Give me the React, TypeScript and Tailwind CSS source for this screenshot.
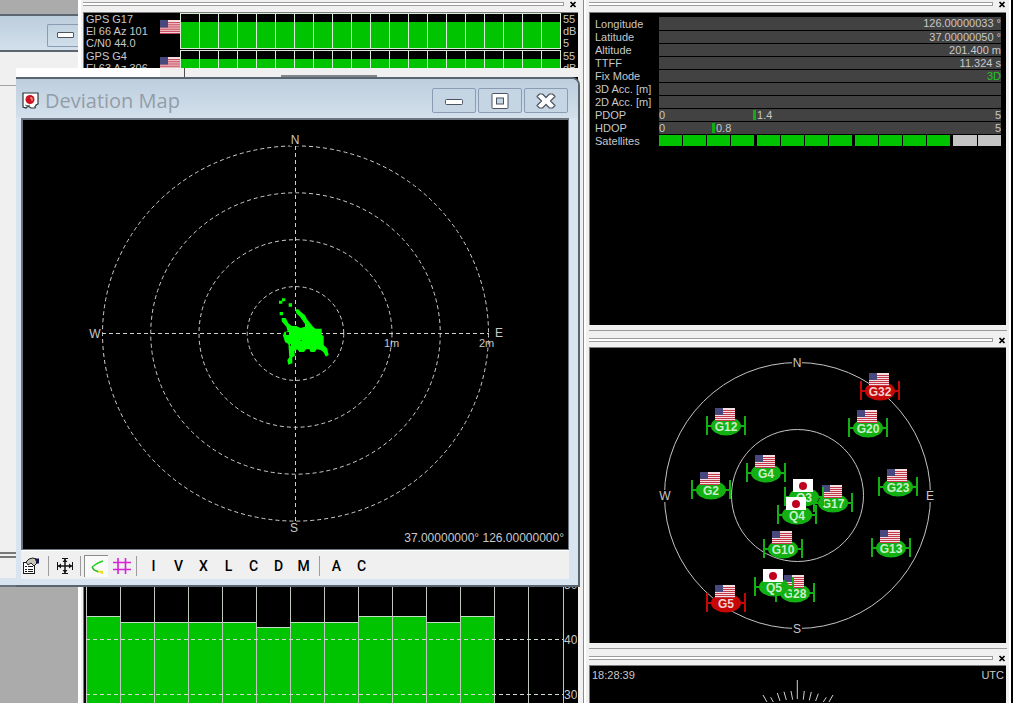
import React from 'react';
import clsx from 'clsx';

type Nation = 'us' | 'jp';

interface Satellite { id: string; x: number; y: number; nation: Nation; unused?: boolean }

// Centre of each marker on the sky view, drawn back to front
const SATELLITES: Satellite[] = [
  { id: 'G32', x: 291, y: 43,  nation: 'us', unused: true },
  { id: 'G12', x: 137, y: 78,  nation: 'us' },
  { id: 'G20', x: 279, y: 80,  nation: 'us' },
  { id: 'G4',  x: 177, y: 125, nation: 'us' },
  { id: 'G2',  x: 122, y: 142, nation: 'us' },
  { id: 'G23', x: 309, y: 139, nation: 'us' },
  { id: 'G17', x: 244, y: 155, nation: 'us' },
  { id: 'Q3',  x: 215, y: 149, nation: 'jp' },
  { id: 'Q4',  x: 208, y: 167, nation: 'jp' },
  { id: 'G10', x: 194, y: 201, nation: 'us' },
  { id: 'G13', x: 302, y: 200, nation: 'us' },
  { id: 'G28', x: 206, y: 245, nation: 'us' },
  { id: 'Q5',  x: 185, y: 239, nation: 'jp' },
  { id: 'G5',  x: 137, y: 255, nation: 'us', unused: true },
];

const FIX_ROWS = [
  { label: 'Longitude',   value: '126.00000033 °' },
  { label: 'Latitude',    value: '37.00000050 °' },
  { label: 'Altitude',    value: '201.400 m' },
  { label: 'TTFF',        value: '11.324 s' },
  { label: 'Fix Mode',    value: '3D', good: true },
  { label: '3D Acc. [m]', value: '' },
  { label: '2D Acc. [m]', value: '' },
];

const DOP_ROWS = [
  { label: 'PDOP', value: 1.4 },
  { label: 'HDOP', value: 0.8 },
];
const DOP_MAX = 5;

const HISTORY = [
  { id: 'G17', el: 66, az: 101, cn0: '44.0' },
  { id: 'G4',  el: 63, az: 306, cn0: '43.0' },
];

// Top edge of every signal bar
const BAR_TOPS = [286, 292, 292, 292, 292, 297, 292, 292, 286, 286, 292, 286];

const DIAL_TICKS = [
  'M540 198l12 21', 'M563 205l8 14', 'M583 192l8 24', 'M603 188l7 25', 'M624 186l5 26',
  'M643 153v57', 'M664 186l-3 26', 'M685 189l-6 25', 'M706 194l-8 22', 'M730 205l-9 14', 'M750 198l-12 21',
];

function FlagShapes({ nation }: { nation: Nation }) {
  if (nation === 'jp') {
    return (
      <>
        <rect width="20" height="13" fill="#fff" />
        <circle cx="10" cy="7" r="4" fill="#c00020" />
      </>
    );
  }
  return (
    <>
      <rect width="20" height="13" fill="#f6dfe2" />
      {[2, 4, 6, 8, 10, 12].map(y => <rect key={y} y={y} width="20" height="1" fill="#c23a4c" />)}
      <rect width="8" height="7" fill="#47487e" />
    </>
  );
}

function DockHeader({ first }: { first?: boolean }) {
  return (
    <div className={clsx('flex items-start', first ? 'h-3 pt-px' : 'h-[17px] border-t border-[#9a9a9a] pt-[6px]')}>
      <div className="mt-px h-1 flex-1 border-y border-r border-[#9c9c9c] bg-white" />
      <button aria-label="Close panel" className="ml-[5px] mr-px h-2 w-2">
        <svg viewBox="0 0 8 8" className="h-2 w-2">
          <path d="M1.500 1l5 5M6.500 1l-5 5" stroke="#000" strokeWidth="1.700" />
        </svg>
      </button>
    </div>
  );
}

const SCREEN = 'border-l border-t border-[#7c7c7c] bg-black text-[#c8c8c8]';

function HistoryRow({ id, el, az, cn0 }: { id: string; el: number; az: number; cn0: string }) {
  return (
    <div className="flex h-[37px] text-[11px] leading-[12px]">
      <div className="w-[76px] whitespace-nowrap pl-0.5">
        <div>GPS {id}</div>
        <div>El {el} Az {az}</div>
        <div>C/N0 {cn0}</div>
      </div>
      <svg viewBox="0 0 20 13" className="mt-[7px] h-[14px] w-5" preserveAspectRatio="none"><FlagShapes nation="us" /></svg>
      <div className="flex h-[36px] flex-1 border-y border-r border-[#d8ecd8]">
        {Array.from({ length: 20 }, (_, i) => (
          <div key={i} className="flex-1 border-l border-[#d8ecd8] pt-2">
            <div className="h-full bg-[#00c400]" />
          </div>
        ))}
      </div>
      <div className="w-[17px] pl-0.5">
        <div>55</div>
        <div>dB</div>
        <div>5</div>
      </div>
    </div>
  );
}

function SignalChart() {
  return (
    <svg width="493" height="373" viewBox="0 0 493 373" className="block" fontSize="12" shapeRendering="crispEdges">
      {BAR_TOPS.map((top, i) => (
        <g key={i}>
          <rect x={2 + i * 34} y={top} width="34" height={373 - top} fill="#00c400" />
          <path d={`M${2 + i * 34} ${top + 0.5}h34`} stroke="#c4dcc4" />
        </g>
      ))}
      {Array.from({ length: 15 }, (_, i) => (
        <path key={i} d={`M${2.5 + (i === 14 ? 477 : i * 34)} 0v373`} stroke="#c0c8c0" />
      ))}
      {[50, 40, 30].map((db, i) => (
        <g key={db}>
          <path d={`M2 ${254.5 + i * 55}h477`} stroke="#d0dcd0" strokeDasharray="4 3" />
          <text x="480" y={259 + i * 55} fill="#c8c8c8">{db}</text>
        </g>
      ))}
    </svg>
  );
}

function FixTable() {
  return (
    <table className="w-full border-collapse text-[11px] leading-[12px]">
      <tbody>
        {FIX_ROWS.map(row => (
          <tr key={row.label} className="h-[13px]">
            <th className="w-16 whitespace-nowrap p-0 text-left font-normal">{row.label}</th>
            <td className={clsx('border-b border-black bg-[#424242] p-0 text-right', row.good && 'text-[#22c422]')}>{row.value}</td>
          </tr>
        ))}
        {DOP_ROWS.map(row => (
          <tr key={row.label} className="h-[13px]">
            <th className="w-16 p-0 text-left font-normal">{row.label}</th>
            <td className="border-b border-black bg-[#424242] p-0">
              <div className="relative flex justify-between">
                <span>0</span>
                <span className="absolute top-0 flex h-3 items-center" style={{ left: `${row.value / DOP_MAX * 100 - 0.5}%` }}>
                  <i className="mr-px h-2.5 w-[3px] bg-[#12ac12]" />
                  {row.value}
                </span>
                <span>{DOP_MAX}</span>
              </div>
            </td>
          </tr>
        ))}
        <tr className="h-[13px]">
          <th className="w-16 p-0 text-left font-normal">Satellites</th>
          <td className="p-0">
            <div className="flex h-[11px] gap-[3px]">
              {[4, 4, 4].map((count, g) => (
                <div key={g} className="flex flex-[4] gap-px">
                  {Array.from({ length: count }, (_, i) => <div key={i} className="flex-1 bg-[#00c400]" />)}
                </div>
              ))}
              <div className="flex flex-[2] gap-px">
                <div className="flex-1 bg-[#c4c4c4]" />
                <div className="flex-1 bg-[#c4c4c4]" />
              </div>
            </div>
          </td>
        </tr>
      </tbody>
    </table>
  );
}

function Compass({ x, y, children }: { x: number; y: number; children: string }) {
  return (
    <g>
      <rect x={x - 5} y={y - 6} width="10" height="12" fill="#000" />
      <text x={x} y={y + 4} textAnchor="middle" fontSize="12" fill="#c8c8c8">{children}</text>
    </g>
  );
}

function SkyView() {
  return (
    <svg viewBox="1 0 416 295" className="block w-full">
      <g fill="none" stroke="#c4c4c4">
        <circle cx="208.500" cy="147.500" r="133" />
        <circle cx="208.500" cy="147.500" r="66" />
      </g>
      <Compass x={208} y={15}>N</Compass>
      <Compass x={208} y={281}>S</Compass>
      <Compass x={76} y={148}>W</Compass>
      <Compass x={341} y={148}>E</Compass>
      {SATELLITES.map(s => {
        const color = s.unused ? '#c40808' : '#12b012';
        return (
          <g key={s.id} transform={`translate(${s.x} ${s.y})`}>
            <path d="M-19 -10V9M19 -10V9M-19 0H19" stroke={color} strokeWidth="2" />
            <ellipse rx="15" ry="9.500" fill={color} />
            <text y="5" textAnchor="middle" fontSize="12" fontWeight="bold" fill={s.unused ? '#f4d0d0' : '#c8f0c8'}>{s.id}</text>
            <g transform="translate(-11 -18)"><FlagShapes nation={s.nation} /></g>
          </g>
        );
      })}
    </svg>
  );
}

function DeviationPlot() {
  return (
    <svg viewBox="0 0 545 429" className="block w-full" fontSize="12">
      <g fill="none" stroke="#d0d0d0" strokeDasharray="4 3">
        {[1, 2, 3, 4].map(n => <ellipse key={n} cx="272.500" cy="213.500" rx={n * 48.25} ry={n * 46.9} />)}
        <path d="M79 213.500H466M272.500 26V401" />
      </g>
      <Compass x={272} y={20}>N</Compass>
      <Compass x={271} y={408}>S</Compass>
      <Compass x={72} y={214}>W</Compass>
      <Compass x={476} y={213}>E</Compass>
      <g fill="#c8c8c8">
        <text x="361" y="227" fontSize="11">1m</text>
        <text x="456" y="227" fontSize="11">2m</text>
        <text x="541" y="422" textAnchor="end">37.00000000° 126.00000000°</text>
      </g>
      {/* Position scatter */}
      <g transform="translate(217 150) scale(0.3333)" fill="#00ff00">
        <path d="M165 118h10l8 8 12 10 6 12 10 12 8 10 8 6h18v18l6 4v28l10 8 5 20-8 6-8-14-8-6-12-2-6 8h-12l-4-8h-10l-6 8h-14l-6-8-9 6 2 14-8 4v18l-12 4-3-14 6-8-3-40-10-6-6-20 4-10 10-2-4-14-14-16v-10h12l8 16 10 8h14l12 6 14-4v-8l-14-20-12-12z" />
        <path d="M117 92h10v9h-10zM126 85h10v9h-10zM146 100h10v10h-10zM119 126h10v10h-10z" />
        <path d="M138 186h9v9h-9zM182 210h3v3h-3zM150 223h3v4h-3z" fill="#001a00" />
      </g>
    </svg>
  );
}

function CaptionButton({ label, children }: { label: string; children: React.ReactNode }) {
  return (
    <button aria-label={label} className="flex h-[25px] w-11 items-center justify-center rounded-[2px] border border-[#8a9cb4] bg-[#c6d5e4]">
      <svg viewBox="0 0 22 18" className="h-[18px] w-[22px]" fill="#fff" stroke="#4c5460">{children}</svg>
    </button>
  );
}

const Separator = () => <div className="h-5 w-px bg-[#9c9c9c]" />;

function Toolbar() {
  const letter = 'h-6 w-[25px] font-[Roboto,sans-serif] text-sm font-medium text-black';
  return (
    <div className="flex h-[29px] items-center border-t border-white bg-[#f0f0f0] pt-0.5">
      <button aria-label="Properties" className="flex h-6 w-[27px] items-center">
        <svg viewBox="0 0 20 18" className="h-[18px] w-5" fill="none" stroke="#1c1c1c">
          <rect x="2.500" y="5.500" width="11" height="11" fill="#fff" />
          <path d="M4 9.500h2M4 12.500h2M4 14.500h2M7 9.500h5M7 12.500h5M7 14.500h5" />
          <path d="M5 5l3-3 4-1 3 1 1 4-3 3-3-3-3 2z" fill="#c8c4b8" />
          <path d="M14 2.500h3v3h-2" stroke="#14144c" strokeWidth="2" />
        </svg>
      </button>
      <Separator />
      <button aria-label="Fit view" className="flex h-6 w-[31px] items-center justify-center">
        <svg viewBox="0 0 18 18" className="h-[18px] w-[18px]" fill="none" stroke="#141414">
          <path d="M9 1v16M1 9h16" strokeWidth="1.500" />
          <path d="M1.500 5v8M16.500 5v8M6 1.500h6M6 16.500h6" />
          <path d="M6.500 5L9 2l2.500 3zM6.500 13L9 16l2.500-3zM5 6.500L2 9l3 2.500zM13 6.500L16 9l-3 2.500z" fill="#141414" stroke="none" />
        </svg>
      </button>
      <Separator />
      <button aria-label="Track" className="ml-[3px] flex h-[22px] w-6 items-center justify-center border-l border-t border-[#8c8c8c] bg-[#fafafa]">
        <svg viewBox="0 0 16 16" className="h-4 w-4" fill="none" strokeWidth="1.500">
          <path d="M14 2L9 4 3 8" stroke="#20d020" />
          <path d="M3 8l2 3 5 2" stroke="#20c020" />
          <path d="M9 12.500l4 .5v2" stroke="#e8e020" strokeWidth="2" />
        </svg>
      </button>
      <button aria-label="Grid" className="flex h-6 w-7 items-center justify-center">
        <svg viewBox="0 0 18 16" className="h-4 w-[18px]" fill="none" stroke="#d820d8" strokeWidth="1.600">
          <path d="M5 0v16M12.500 0v16M0 4.500h18M0 11.500h18" />
        </svg>
      </button>
      <Separator />
      <div className="flex pl-1 pr-[3px]">
        {['I', 'V', 'X', 'L', 'C', 'D', 'M'].map(l => <button key={l} className={letter}>{l}</button>)}
      </div>
      <Separator />
      <div className="flex pl-1">
        {['A', 'C'].map(l => <button key={l} className={letter}>{l}</button>)}
      </div>
    </div>
  );
}

function DeviationWindow() {
  return (
    <section className="rounded-tr-lg border-r-2 border-t-2 border-b-2 border-[#586470] bg-[#d8e4f0]">
      <header className="flex h-[39px] items-center rounded-tr-md bg-gradient-to-b from-[#becedd] to-[#d3e0ec] pl-1.5 pr-2.5 pt-1">
        <svg viewBox="0 0 17 17" className="h-[17px] w-[17px]">
          <path d="M1 1h15v11l-2 1-1 3H9l-3-2-2 2-3-1z" fill="#fff" stroke="#2c3438" strokeWidth="1.200" />
          <circle cx="8" cy="7.500" r="4.500" fill="#cc1420" />
          <path d="M8 6h2v3" stroke="#f4b8bc" fill="none" />
          <path d="M3 13l3 1 2-1M12 15l3-2" stroke="#507860" fill="none" />
        </svg>
        <h1 className="ml-1.5 flex-1 font-['Open_Sans',sans-serif] text-xl leading-6 text-[#929da8]">Deviation Map</h1>
        <div className="flex gap-0.5">
          <CaptionButton label="Minimize"><rect x="2.500" y="7.500" width="17" height="5" rx="1" /></CaptionButton>
          <CaptionButton label="Maximize">
            <rect x="3" y="1.500" width="16" height="15" rx="1" />
            <rect x="7.500" y="6" width="7" height="6" fill="#c6d5e4" />
          </CaptionButton>
          <CaptionButton label="Close">
            <path d="M4.500 2h3L11 5.500 14.500 2h3l2.500 2.500L15.500 9l4.500 4.500-2.500 2.500h-3L11 12.500 7.500 16h-3L2 13.500 6.500 9 2 4.500z" strokeWidth="1.200" strokeLinejoin="round" />
          </CaptionButton>
        </div>
      </header>
      <div className="mb-1.5 ml-[5px] mr-[9px]">
        <div className="border-2 border-b border-r border-[#6c7480] bg-black"><DeviationPlot /></div>
        <Toolbar />
      </div>
    </section>
  );
}

export default function App() {
  return (
    <main className="relative flex h-screen w-full overflow-hidden bg-[#f0f0f0] font-['Liberation_Sans',Arial,sans-serif]">
      {/* Window left behind the docked panels */}
      <div className="flex w-[78px] shrink-0 flex-col bg-[#ababab]">
        <div className="mt-3.5 flex h-[38px] items-center justify-end overflow-hidden border-y-2 border-[#5c6670] bg-gradient-to-b from-[#bccddc] to-[#d3e0ec]">
          <button aria-label="Minimize" className="mt-1 flex h-[23px] w-[31px] shrink-0 items-center justify-end rounded-l-[2px] border border-r-0 border-[#8a9cb4] pr-1">
            <span className="h-[6px] w-[17px] rounded-[1px] border border-[#4c5460] bg-white" />
          </button>
        </div>
        <div className="h-[34px] border-b border-[#a4a4a4] bg-[#f0f0f0]" />
        <div className="h-[466px] bg-[#f0f0f0]" />
        <div className="h-[6px] border-y-2 border-[#787878] bg-[#f0f0f0]" />
        <div className="h-5 bg-[#f0f0f0]" />
        <div className="h-[9px] border-b-2 border-[#68727c] bg-[#d8e4f0]" />
      </div>

      {/* Signal panels */}
      <div className="flex w-[505px] shrink-0 flex-col border-l-[3px] border-white pl-0.5 pr-[5px]">
        <DockHeader first />
        <div className={clsx('mb-[5px] h-[295px] overflow-hidden', SCREEN)}>
          {HISTORY.map(row => <HistoryRow key={row.id} {...row} />)}
        </div>
        <DockHeader />
        <div className={clsx('flex-1 overflow-hidden', SCREEN)}><SignalChart /></div>
      </div>

      {/* Fix, sky and clock panels */}
      <div className="flex min-w-0 flex-1 flex-col border-l border-r-2 border-l-[#8c8c8c] border-r-black">
        <div className="flex flex-1 flex-col border-x-2 border-white pl-[3px] pr-0.5">
          <DockHeader first />
          <div className={clsx('mb-[5px] mr-px h-[313px] pl-[5px] pr-[5px] pt-1', SCREEN)}><FixTable /></div>
          <DockHeader />
          <div className={clsx('mb-[5px] mr-px', SCREEN)}><SkyView /></div>
          <DockHeader />
          <div className={clsx('mr-px flex-1 overflow-hidden', SCREEN)}>
            <div className="flex justify-between px-0.5 pt-0.5 text-[11px] leading-[14px]">
              <span>18:28:39</span>
              <span>UTC</span>
            </div>
            <svg viewBox="0 0 80 24" className="mx-auto -mt-0.5 block h-6 w-20">
              <g transform="translate(-175 -51) scale(0.3333)" stroke="#d0d0d0" strokeWidth="3" fill="none">
                {DIAL_TICKS.map(d => <path key={d} d={d} />)}
              </g>
            </svg>
          </div>
        </div>
      </div>

      {/* Floating map window, with the toolbar strip showing above it */}
      <div className="absolute left-4 top-[68px] w-[564px]">
        <div className="flex h-[9px] bg-[#f0f0f0]">
          <div className="w-36 bg-white" />
          <div className="w-[25px] border-r border-[#505050]" />
          <div className="ml-24 w-24 border-b-2 border-[#80868c]" />
        </div>
        <DeviationWindow />
      </div>
    </main>
  );
}
